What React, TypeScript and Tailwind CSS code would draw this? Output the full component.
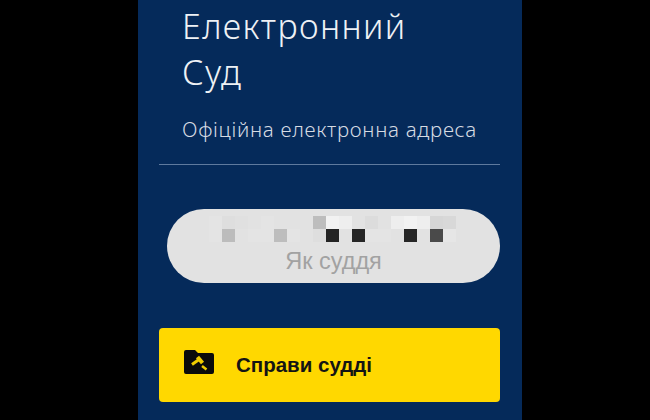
const mosaicRows = [
  [
    "bg-[#e4e4e4]", "bg-[#dedede]", "bg-[#e0e0e0]", "bg-[#e2e2e2]", "bg-[#e4e4e4]", "bg-[#e2e2e2]", "bg-[#e2e2e2]",
    "bg-[#e2e2e2]", "bg-[#bdbdbd]", "bg-[#f2f2f2]", "bg-[#eeeeee]", "bg-[#e2e2e2]", "bg-[#dcdcdc]", "bg-[#e2e2e2]",
    "bg-[#eeeeee]", "bg-[#f2f2f2]", "bg-[#eeeeee]", "bg-[#d6d6d6]", "bg-[#d8d8d8]",
  ],
  [
    "bg-[#e4e4e4]", "bg-[#bcbcbc]", "bg-[#e2e2e2]", "bg-[#e4e4e4]", "bg-[#e4e4e4]", "bg-[#bdbdbd]", "bg-[#e4e4e4]",
    "bg-[#e2e2e2]", "bg-[#dedede]", "bg-[#242424]", "bg-[#e2e2e2]", "bg-[#262626]", "bg-[#e4e4e4]", "bg-[#e4e4e4]",
    "bg-[#e2e2e2]", "bg-[#262626]", "bg-[#e2e2e2]", "bg-[#4a4a4a]", "bg-[#e6e6e6]",
  ],
];

function GavelFolderIcon() {
  return (
    <svg width="30" height="24" viewBox="0 0 30 24">
      <path
        d="M2 0h9l3 3h14a2 2 0 0 1 2 2v17a2 2 0 0 1-2 2H2a2 2 0 0 1-2-2V2a2 2 0 0 1 2-2z"
        fill="#0b0b0b"
      />
      <g stroke="#f0cc00" fill="none">
        <path d="M8 14.500l7-5" strokeWidth="3" />
        <path d="M13.500 7l5 6" strokeWidth="4" />
        <path d="M18 16l4.500 3.500" strokeWidth="2.500" />
      </g>
    </svg>
  );
}

export default function App() {
  return (
    <div className="h-[420px] w-[650px] overflow-hidden bg-black pl-[138px] font-['Noto_Sans',sans-serif]">
      <div className="h-[420px] w-[384px] overflow-hidden bg-[#052a5a] px-[21px]">
        <div className="pl-[23px] pt-[3px]">
          <h1 className="text-[34px] font-light leading-[46px] tracking-[1.4px] text-[#eef1f5]">
            Електронний
            <br />
            Суд
          </h1>
          <p className="mt-[20px] text-[20.500px] font-light leading-[28px] tracking-[0.7px] text-[#d6dbe3]">
            Офіційна електронна адреса
          </p>
        </div>
        <div className="mt-[21px] h-px w-[341px] bg-[#5f7a9e]" />
        <div className="ml-[8px] mt-[44px] flex h-[74px] w-[333px] flex-col items-center rounded-[37px] bg-[#e2e2e2] pt-[7px]">
          <div className="mr-[2px] flex flex-col">
            {mosaicRows.map((row, i) => (
              <div key={i} className="flex">
                {row.map((color, j) => (
                  <div key={j} className={`h-[13px] w-[13px] ${color}`} />
                ))}
              </div>
            ))}
          </div>
          <span className="mt-[5px] font-['Liberation_Sans',sans-serif] text-[23.500px] leading-[28px] text-[#a2a2a2]">
            Як суддя
          </span>
        </div>
        <div className="mt-[45px] flex h-[74px] w-[341px] items-center gap-[22px] rounded-[4px] bg-[#ffd800] pl-[25px]">
          <div className="mb-[7px]">
            <GavelFolderIcon />
          </div>
          <span className="font-['Liberation_Sans',sans-serif] text-[20.500px] font-bold text-[#141414]">
            Справи судді
          </span>
        </div>
      </div>
    </div>
  );
}
